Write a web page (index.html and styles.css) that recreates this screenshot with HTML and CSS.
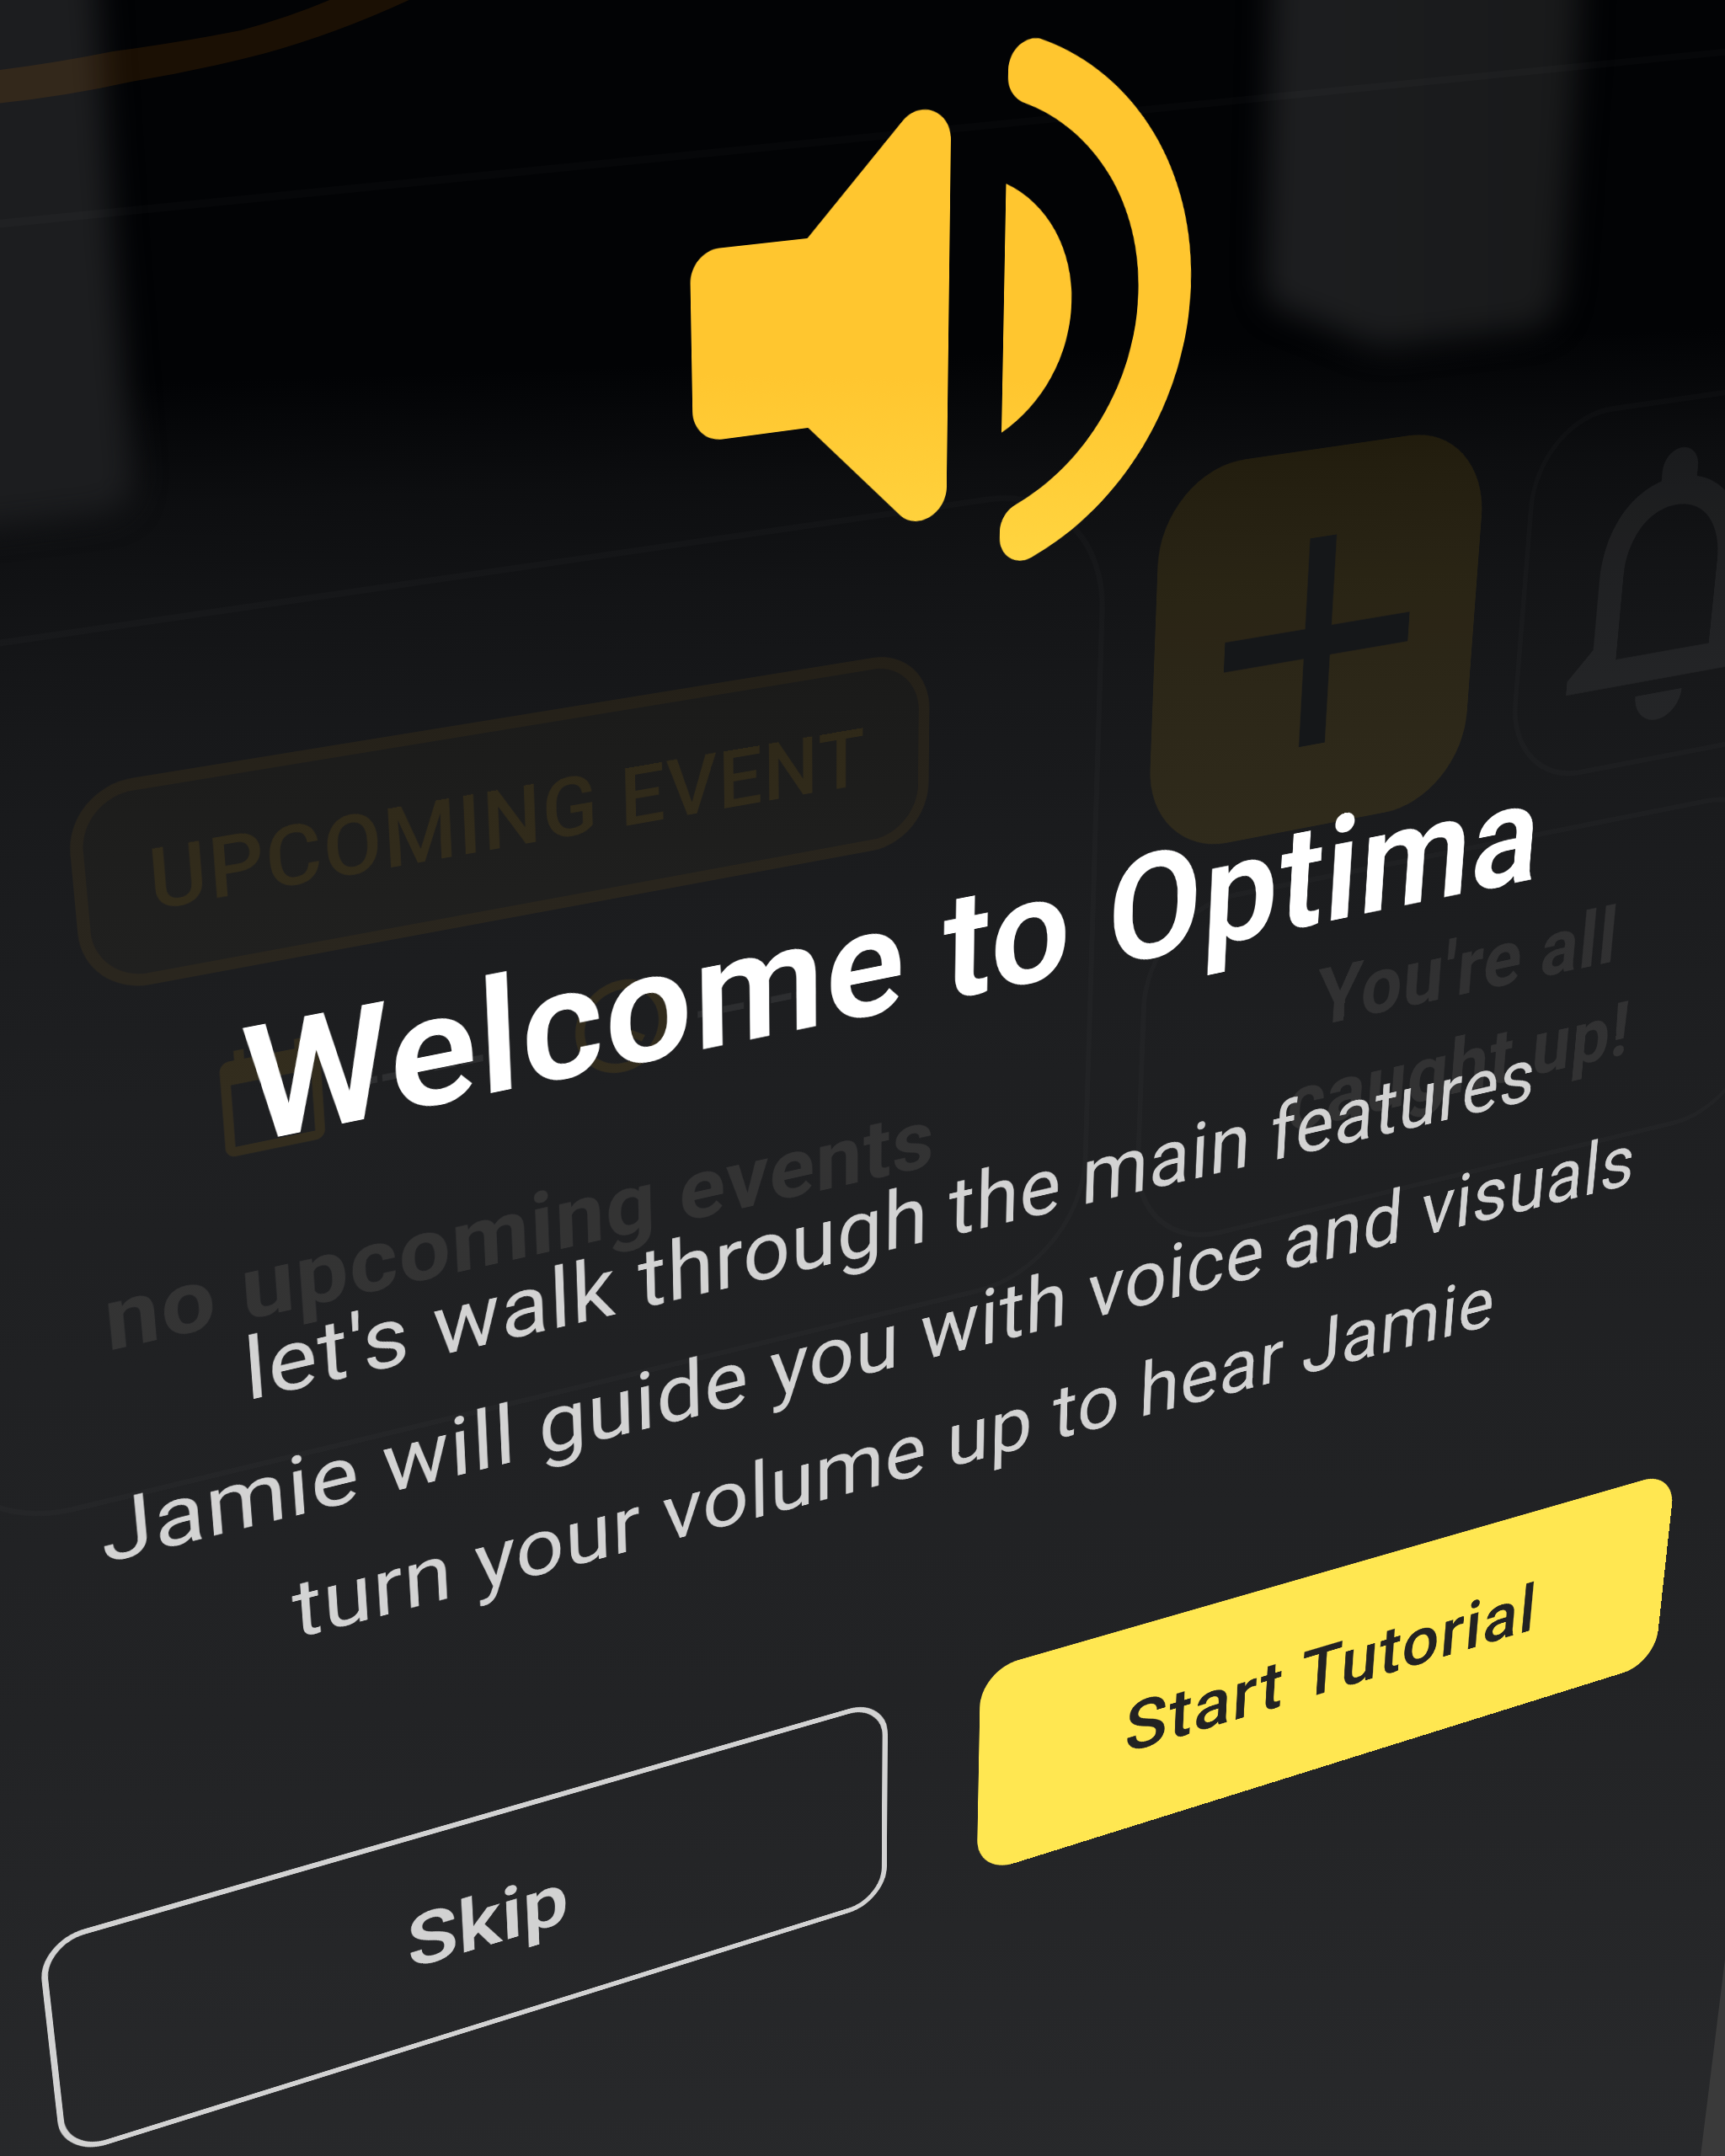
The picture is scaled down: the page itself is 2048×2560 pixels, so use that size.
FILE: index.html
```html
<!DOCTYPE html>
<html lang="en">
<head>
<meta charset="utf-8">
<title>Welcome to Optima</title>
<link rel="stylesheet" href="styles.css">
</head>
<body>
<svg class="backdrop" viewBox="0 0 2048 2560" aria-hidden="true">
  <defs>
    <filter id="soft" x="-30%" y="-30%" width="160%" height="160%" color-interpolation-filters="sRGB"><feGaussianBlur stdDeviation="18"/></filter>
    <linearGradient id="blob" x1="0" y1="0" x2="1" y2="0"><stop offset="0" stop-color="#1d1e20"/><stop offset="1" stop-color="#18191a"/></linearGradient>
  </defs>
  <path fill="#1c1d1f" filter="url(#soft)" d="M-120-120H108L116 0L136 300L158 560Q160 606 120 610L-120 640Z"/>
  <path fill="url(#blob)" filter="url(#soft)" d="M1514-120H1880L1874 60L1854 340Q1848 388 1810 392L1650 412Q1630 414 1600 398L1520 366Q1502 356 1502 330L1510 0Z"/>
  <path fill="#ff8c00" fill-opacity=".1" d="M-10 84L0 83Q70 74 134 61Q215 50 286 36Q345 20 396-2H490Q400 40 312 64Q235 84 156 97Q80 114 0 122.500L-10 124Z"/>
  <path fill="#3a3a3a" d="M2049 2318L2019 2560H2049Z"/>
</svg>

<main class="plane dashboard">
  <div class="panel-edge"></div>
  <div class="cards">
    <section class="card event">
      <span class="pill">UPCOMING EVENT</span>
      <div class="when">
        <svg class="glyph" viewBox="0 0 24 24"><path d="M20 3h-1V1h-2v2H7V1H5v2H4c-1.100 0-2 .9-2 2v16c0 1.100.9 2 2 2h16c1.100 0 2-.9 2-2V5c0-1.100-.9-2-2-2zm0 18H4V8h16v13z"/></svg>
        <span class="blank date">-- --</span>
        <svg class="glyph" viewBox="0 0 24 24"><path d="M11.990 2C6.470 2 2 6.480 2 12s4.470 10 9.990 10C17.520 22 22 17.520 22 12S17.520 2 11.990 2zM12 20c-4.420 0-8-3.580-8-8s3.580-8 8-8 8 3.580 8 8-3.580 8-8 8zm.5-13H11v6l5.250 3.150.75-1.230-4.500-2.670z"/></svg>
        <span class="blank">-- --</span>
      </div>
      <p class="note">no upcoming events</p>
    </section>
    <button class="tile add" aria-label="Add">
      <svg viewBox="0 0 24 24"><path d="M19 13h-6v6h-2v-6H5v-2h6V5h2v6h6v2z"/></svg>
    </button>
    <button class="tile bell" aria-label="Notifications">
      <svg viewBox="0 0 24 24"><path d="M12 22c1.100 0 2-.9 2-2h-4c0 1.100.9 2 2 2zm6-6v-5c0-3.070-1.630-5.640-4.500-6.320V4c0-.83-.67-1.500-1.500-1.500s-1.500.67-1.500 1.500v.68C7.640 5.360 6 7.920 6 11v5l-2 2v1h16v-1l-2-2zm-2 1H8v-6c0-2.480 1.510-4.500 4-4.500s4 2.020 4 4.500v6z"/></svg>
    </button>
    <section class="card inbox"><p class="note">You're all<br>caught up!</p></section>
  </div>
</main>

<div class="plane welcome" role="dialog" aria-labelledby="title">
  <svg class="speaker" viewBox="0 0 24 24" aria-hidden="true">
    <defs><linearGradient id="amber" gradientUnits="userSpaceOnUse" x1="0" y1="12.400" x2="-.8" y2="18.500"><stop offset="0" stop-color="#ffc62f"/><stop offset="1" stop-color="#ffd540"/></linearGradient></defs>
    <path fill="url(#amber)" d="M3 10v4c0 .55.45 1 1 1h3l3.290 3.290c.63.63 1.710.18 1.710-.71V6.410c0-.89-1.080-1.340-1.710-.71L7 9H4c-.55 0-1 .45-1 1zm13.500 2A4.500 4.500 0 0 0 14 7.970v8.050c1.480-.73 2.500-2.250 2.500-4.020zM14 4.450v.2c0 .38.25.71.6.85C17.180 6.530 19 9.060 19 12s-1.820 5.470-4.400 6.500c-.36.14-.6.47-.6.85v.2c0 .63.63 1.070 1.210.85C18.600 19.110 21 15.840 21 12s-2.400-7.110-5.790-8.400c-.58-.23-1.210.22-1.210.85z"/>
  </svg>
  <h1 class="title" id="title">Welcome to Optima</h1>
  <p class="lead">let's walk through the main features<br>Jamie will guide you with voice and visuals<br>turn your volume up to hear Jamie</p>
  <div class="actions">
    <button class="btn skip">Skip</button>
    <button class="btn start">Start Tutorial</button>
  </div>
</div>
</body>
</html>
```
FILE: styles.css
```css
* { box-sizing: border-box; margin: 0; padding: 0; }

html, body { width: 2048px; height: 2560px; overflow: hidden; }

body {
  position: relative;
  contain: paint;
  font-family: Roboto, "Liberation Sans", sans-serif;
  background: linear-gradient(178deg, #020305 0, #020305 17.5%, #08090b 20.500%, #0d0e10 23%, #131416 28%, #17181a 33%, #1b1c1e 41%, #1e1f21 50%, #202123 62%, #222325 78%, #262729 92%, #28292b 100%);
}

button { font: inherit; color: inherit; background: none; border: 0; }

.backdrop { position: absolute; top: 0; left: 0; width: 2048px; height: 2560px; }

.plane {
  position: absolute;
  top: 0;
  left: 0;
  width: 3246px;
  height: 4200px;
  transform-origin: 0 0;
  transform: matrix3d(1.0695625, -0.0804, 0, 0.000098125, 0.10325, 1.1151, 0, 0.00010325, 0, 0, 1, 0, 0, -4, 0, 1) translateX(-432px);
}

/* Dashboard, dimmed behind the dialog */
.panel-edge { height: 250px; border-bottom: 9px solid rgba(255, 255, 255, .016); }

.cards {
  display: grid;
  grid-template-columns: 1692px 530px 527px;
  grid-template-rows: 556px 550px;
  gap: 79px 81px;
  padding: 476px 165px 0;
}

.card, .bell { border: 8px solid rgba(255, 255, 255, .014); border-radius: 150px; }
.event { border-radius: 180px; }

.event {
  grid-row: span 2;
  display: flex;
  flex-direction: column;
  align-items: center;
  padding-top: 188px;
}

.pill {
  width: 1170px;
  height: 272px;
  margin-right: 11px;
  border: 16px solid rgba(255, 175, 0, .06);
  border-radius: 84px;
  background: rgba(255, 175, 0, .015);
  background-clip: padding-box;
  color: rgba(255, 180, 0, .085);
  font-size: 112px;
  font-weight: 500;
  line-height: 240px;
  letter-spacing: 2px;
  text-align: center;
}

.when { display: flex; align-items: center; gap: 28px; height: 160px; margin: 104px 8px 0 0; }
.glyph { width: 160px; height: 160px; fill: rgba(255, 180, 0, .09); }
.blank { width: 200px; font-size: 128px; line-height: 136px; letter-spacing: 2px; white-space: nowrap; color: rgba(255, 255, 255, .07); }
.date { margin-right: 68px; }

.note { font-size: 128px; font-weight: 700; letter-spacing: 2px; text-align: center; color: rgba(255, 242, 234, .085); }
.event .note { margin: 90px 6px 0 0; line-height: 192px; }

.tile { display: flex; align-items: center; justify-content: center; border-radius: 132px; }
.tile svg { width: 523px; height: 523px; flex: none; }
.add { background: rgba(255, 185, 0, .09); }
.add svg { fill: #151719; }
.bell svg { width: 510px; height: 510px; fill: rgba(255, 255, 255, .05); }

.inbox { grid-column: 2 / 4; padding: 106px 0 0 4px; }
.inbox .note { line-height: 164px; }

/* Welcome dialog */
.welcome {
  display: flex;
  flex-direction: column;
  align-items: center;
  padding: 2px 240px 0;
}

.speaker { width: 960px; height: 960px; margin-right: 20px; }

.title { margin: 266px 14px 0 0; font-size: 224px; font-weight: 600; line-height: 264px; letter-spacing: 2px; color: #fff; }

.lead {
  margin: 175px 12px 0 0;
  font-size: 128px;
  font-weight: 400;
  line-height: 192px;
  letter-spacing: 1.2px;
  text-align: center;
  color: #d3d3d3;
}

.actions { display: flex; gap: 158px; width: 2771px; margin: 323px 4px 0 0; }

.btn { height: 376px; border-radius: 66px; font-size: 128px; }
.skip { width: 1302px; border: 9px solid #d2d2d2; color: #d2d2d2; font-weight: 600; }
.start { width: 1311px; height: 380px; background: #ffe751; color: #222; font-weight: 500; letter-spacing: 3px; }
```
